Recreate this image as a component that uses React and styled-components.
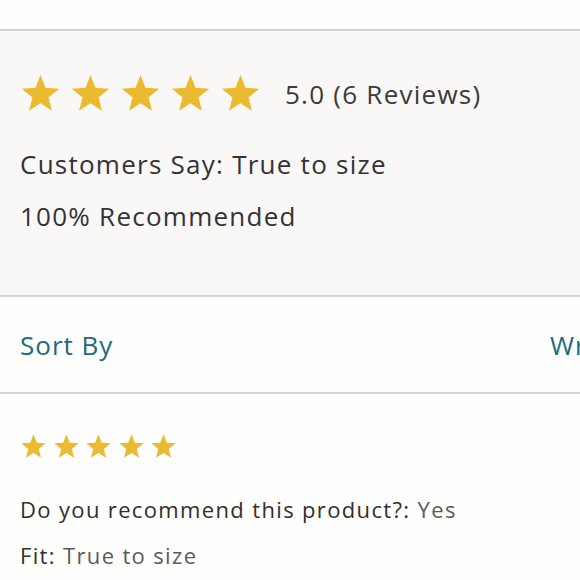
import React from "react";
import styled, { createGlobalStyle } from "styled-components";

const Global = createGlobalStyle`
  html, body { margin: 0; padding: 0; background: #fefefc; }
  body { font-family: "Open Sans", Lato, sans-serif; overflow: hidden; }
`;

const Page = styled.div`
  width: 580px;
  height: 580px;
  overflow: hidden;
  display: flex;
  flex-direction: column;
`;

const TopSpace = styled.div`
  height: 29px;
  border-bottom: 2px solid #d0d0ce;
`;

const Summary = styled.section`
  background: #f9f8f6;
  height: 266px;
  box-sizing: border-box;
  padding: 42px 20px 0;
  border-bottom: 2px solid #d6d6d3;
`;

const StarRow = styled.div`
  display: flex;
  align-items: center;
  gap: ${(p) => p.$gap}px;
`;

const Rating = styled.span`
  margin-left: 15px;
  font-size: 26px;
  color: #3a3a3c;
  letter-spacing: 1.25px;
  padding-top: 1px;
`;

const SummaryLine = styled.p`
  margin: ${(p) => p.$mt}px 0 0;
  font-size: 26px;
  line-height: 30px;
  color: #333336;
  letter-spacing: 1.25px;
`;

const SortBar = styled.div`
  height: 97px;
  box-sizing: border-box;
  display: flex;
  align-items: center;
  justify-content: space-between;
  padding: 0 0 0 20px;
  border-bottom: 2px solid #d6d6d3;
  color: #1f6a7d;
  font-size: 26px;
  letter-spacing: 1px;
`;

const WriteLink = styled.span`
  white-space: nowrap;
  width: 30px;
  overflow: hidden;
`;

const Review = styled.section`
  padding: 39px 20px 0;
`;

const Detail = styled.p`
  margin: ${(p) => p.$mt}px 0 0;
  font-size: 22px;
  line-height: 26px;
  color: #2f2f31;
  letter-spacing: 1.35px;
`;

const Value = styled.span`
  color: #5a5a5c;
`;

const Star = ({ size }) => (
  <svg width={size} height={size} viewBox="0 0 24 24" aria-hidden="true">
    <polygon
      fill="#ebba31"
      points="12,1.2 14.9,8.7 22.9,9.2 16.7,14.3 18.7,22.1 12,17.7 5.3,22.1 7.3,14.3 1.1,9.2 9.1,8.7"
    />
  </svg>
);

const Stars = ({ size }) => (
  <>
    {[0, 1, 2, 3, 4].map((i) => (
      <Star key={i} size={size} />
    ))}
  </>
);

export default function App() {
  return (
    <Page>
      <Global />
      <TopSpace />
      <Summary>
        <StarRow $gap={9}>
          <Stars size={41} />
          <Rating>5.0 (6 Reviews)</Rating>
        </StarRow>
        <SummaryLine $mt={35}>Customers Say: True to size</SummaryLine>
        <SummaryLine $mt={22}>100% Recommended</SummaryLine>
      </Summary>
      <SortBar>
        <span>Sort By</span>
        <WriteLink>Write a Review</WriteLink>
      </SortBar>
      <Review>
        <StarRow $gap={5.5}>
          <Stars size={27} />
        </StarRow>
        <Detail $mt={36}>
          Do you recommend this product?: <Value>Yes</Value>
        </Detail>
        <Detail $mt={20}>
          Fit: <Value>True to size</Value>
        </Detail>
      </Review>
    </Page>
  );
}
